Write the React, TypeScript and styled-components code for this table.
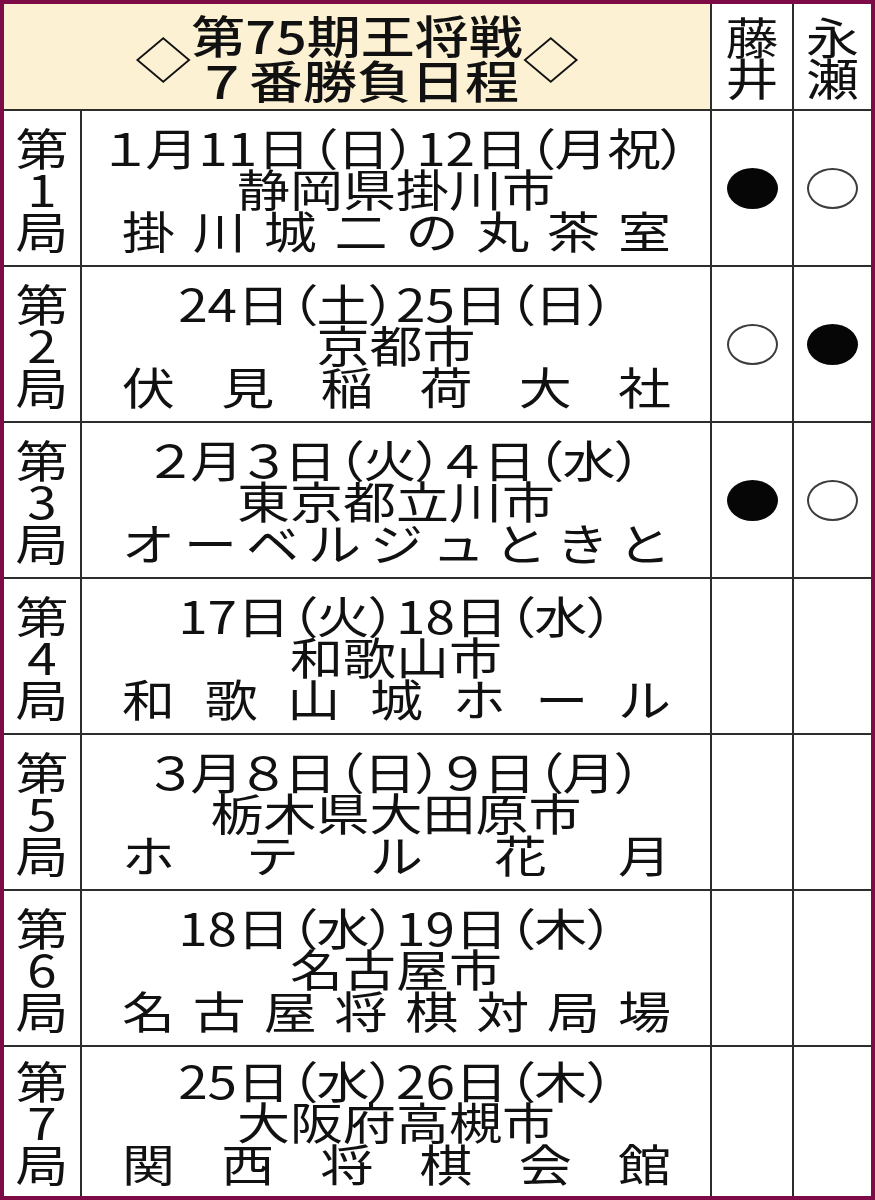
import React from 'react';
import styled, { createGlobalStyle } from 'styled-components';

type Stone = 'win' | 'loss' | null;

interface Game {
  no: string;
  date: string;
  place: string;
  venue: string;
  fujii: Stone;
  nagase: Stone;
}

// 第75期王将戦 schedule, newspaper-style table
const GAMES: Game[] = [
  { no: '1', date: '１月11日（日）12日（月祝）', place: '静岡県掛川市', venue: '掛川城二の丸茶室', fujii: 'win', nagase: 'loss' },
  { no: '2', date: '24日（土）25日（日）', place: '京都市', venue: '伏見稲荷大社', fujii: 'loss', nagase: 'win' },
  { no: '3', date: '２月３日（火）４日（水）', place: '東京都立川市', venue: 'オーベルジュときと', fujii: 'win', nagase: 'loss' },
  { no: '4', date: '17日（火）18日（水）', place: '和歌山市', venue: '和歌山城ホール', fujii: null, nagase: null },
  { no: '5', date: '３月８日（日）９日（月）', place: '栃木県大田原市', venue: 'ホテル花月', fujii: null, nagase: null },
  { no: '6', date: '18日（水）19日（木）', place: '名古屋市', venue: '名古屋将棋対局場', fujii: null, nagase: null },
  { no: '7', date: '25日（水）26日（木）', place: '大阪府高槻市', venue: '関西将棋会館', fujii: null, nagase: null },
];

const GlobalStyle = createGlobalStyle`
  html, body {
    margin: 0;
    padding: 0;
    background: #fff;
  }
  body {
    font-family: "Noto Sans CJK JP", "Noto Sans", sans-serif;
    color: #111;
  }
`;

const Board = styled.div`
  box-sizing: border-box;
  width: 875px;
  height: 1200px;
  border: 4px solid #7c0b46;
  background: #2d2d2d;
  display: grid;
  grid-template-columns: 76px 628px 80px 1fr;
  grid-template-rows: 105px repeat(6, 154px) 1fr;
  gap: 2px;
`;

const Cell = styled.div`
  background: #fff;
  display: flex;
  align-items: center;
  justify-content: center;
  min-width: 0;
`;

const TitleCell = styled(Cell)`
  grid-column: 1 / 3;
  background: #fdf1d4;
`;

// newspaper type is set flattened (平体)
const Flat = styled.div`
  transform: scaleY(0.84);
  font-size: 53px;
  line-height: 49px;
  text-align: center;
`;

const Title = styled(Flat)`
  display: flex;
  align-items: center;
  font-size: 54px;
  line-height: 53px;
  font-weight: 500;
`;

const Diamond = styled.span`
  font-weight: 400;
  font-size: 56px;
`;

const Line = styled.div`
  white-space: nowrap;
`;

const DateLine = styled(Line)`
  font-feature-settings: "palt";
`;

const InfoBlock = styled(Flat)`
  width: 100%;
`;

const Spread = styled.div`
  display: flex;
  justify-content: space-between;
  padding: 0 39px 0 40px;
`;

const StoneMark = styled.span<{ $filled: boolean }>`
  box-sizing: border-box;
  width: 51px;
  height: 41px;
  border-radius: 50%;
  background: ${({ $filled }) => ($filled ? '#060606' : '#fff')};
  border: ${({ $filled }) => ($filled ? 'none' : '2px solid #3c3c3c')};
`;

const Result: React.FC<{ value: Stone }> = ({ value }) => (
  <Cell>{value && <StoneMark $filled={value === 'win'} />}</Cell>
);

export default function App() {
  return (
    <>
      <GlobalStyle />
      <Board>
        <TitleCell>
          <Title>
            <Diamond>◇</Diamond>
            <div>
              <Line>第75期王将戦</Line>
              <Line>７番勝負日程</Line>
            </div>
            <Diamond>◇</Diamond>
          </Title>
        </TitleCell>
        <Cell>
          <Flat>
            <Line>藤</Line>
            <Line>井</Line>
          </Flat>
        </Cell>
        <Cell>
          <Flat>
            <Line>永</Line>
            <Line>瀬</Line>
          </Flat>
        </Cell>

        {GAMES.map((g) => (
          <React.Fragment key={g.no}>
            <Cell>
              <Flat>
                <Line>第</Line>
                <Line>{g.no}</Line>
                <Line>局</Line>
              </Flat>
            </Cell>
            <Cell>
              <InfoBlock>
                <DateLine>{g.date}</DateLine>
                <Line>{g.place}</Line>
                <Spread>
                  {Array.from(g.venue).map((ch, i) => (
                    <span key={i}>{ch}</span>
                  ))}
                </Spread>
              </InfoBlock>
            </Cell>
            <Result value={g.fujii} />
            <Result value={g.nagase} />
          </React.Fragment>
        ))}
      </Board>
    </>
  );
}
